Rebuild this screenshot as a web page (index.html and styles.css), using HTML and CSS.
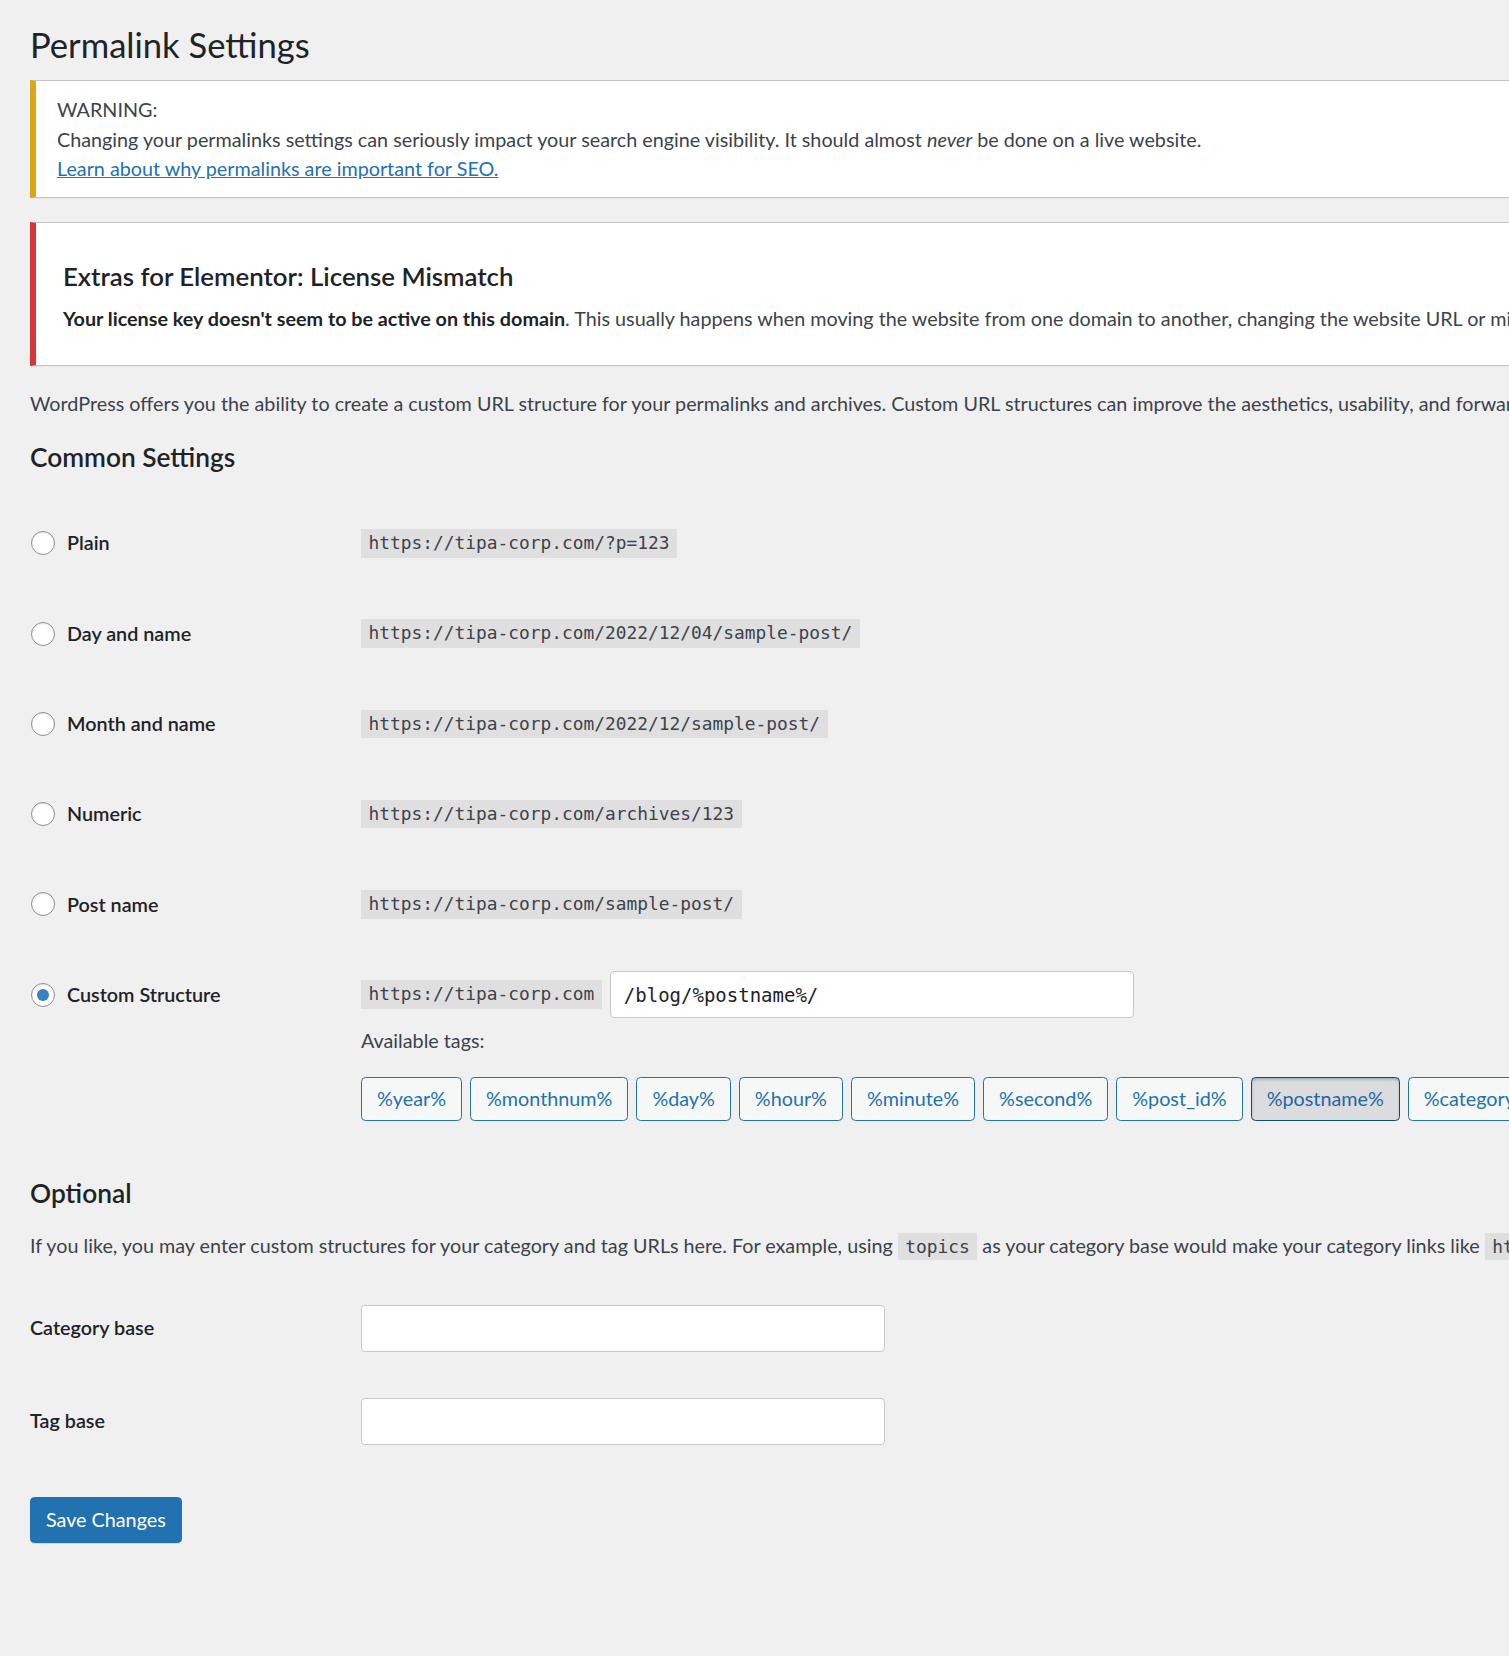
FILE: index.html
```html
<!DOCTYPE html>
<html lang="en">
<head>
  <meta charset="UTF-8">
  <title>Permalink Settings</title>
  <link rel="stylesheet" href="styles.css">
</head>
<body>

<div class="wrap">
  <h1>Permalink Settings</h1>

  <div class="notice notice-warning">
    <p>WARNING:<br>
    Changing your permalinks settings can seriously impact your search engine visibility. It should almost <em>never</em> be done on a live website.<br>
    <a href="#">Learn about why permalinks are important for SEO.</a></p>
  </div>

  <div class="notice notice-error extras">
    <h3>Extras for Elementor: License Mismatch</h3>
    <p><strong>Your license key doesn't seem to be active on this domain</strong>. This usually happens when moving the website from one domain to another, changing the website URL or migrating from a staging site to production.</p>
  </div>

  <p class="intro">WordPress offers you the ability to create a custom URL structure for your permalinks and archives. Custom URL structures can improve the aesthetics, usability, and forward-compatibility of your links. A number of tags are available, and here are some examples to get you started.</p>

  <h2>Common Settings</h2>

  <div class="form-table">
    <div class="row">
      <label class="choice"><input type="radio" name="selection"> Plain</label>
      <div class="field"><div class="line"><code>https://tipa-corp.com/?p=123</code></div></div>
    </div>
    <div class="row">
      <label class="choice"><input type="radio" name="selection"> Day and name</label>
      <div class="field"><div class="line"><code>https://tipa-corp.com/2022/12/04/sample-post/</code></div></div>
    </div>
    <div class="row">
      <label class="choice"><input type="radio" name="selection"> Month and name</label>
      <div class="field"><div class="line"><code>https://tipa-corp.com/2022/12/sample-post/</code></div></div>
    </div>
    <div class="row">
      <label class="choice"><input type="radio" name="selection"> Numeric</label>
      <div class="field"><div class="line"><code>https://tipa-corp.com/archives/123</code></div></div>
    </div>
    <div class="row">
      <label class="choice"><input type="radio" name="selection"> Post name</label>
      <div class="field"><div class="line"><code>https://tipa-corp.com/sample-post/</code></div></div>
    </div>
    <div class="row">
      <label class="choice"><input type="radio" name="selection" checked> Custom Structure</label>
      <div class="field">
        <div class="line">
          <code>https://tipa-corp.com</code>
          <input type="text" class="regular-text code" value="/blog/%postname%/">
        </div>
        <p class="tags-label">Available tags:</p>
        <ul class="tags">
          <li><button type="button">%year%</button></li>
          <li><button type="button">%monthnum%</button></li>
          <li><button type="button">%day%</button></li>
          <li><button type="button">%hour%</button></li>
          <li><button type="button">%minute%</button></li>
          <li><button type="button">%second%</button></li>
          <li><button type="button">%post_id%</button></li>
          <li><button type="button" class="active">%postname%</button></li>
          <li><button type="button">%category%</button></li>
          <li><button type="button">%author%</button></li>
        </ul>
      </div>
    </div>
  </div>

  <h2 class="optional-title">Optional</h2>
  <p class="optional-text">If you like, you may enter custom structures for your category and tag URLs here. For example, using <code>topics</code> as your category base would make your category links like <code>https://tipa-corp.com/topics/uncategorized/</code>. If you leave these blank the defaults will be used.</p>

  <div class="form-table bases">
    <div class="row">
      <label class="plain-label" for="category_base">Category base</label>
      <div class="field"><div class="line"><input type="text" id="category_base" class="regular-text"></div></div>
    </div>
    <div class="row">
      <label class="plain-label" for="tag_base">Tag base</label>
      <div class="field"><div class="line"><input type="text" id="tag_base" class="regular-text"></div></div>
    </div>
  </div>

  <button type="submit" class="button-primary">Save Changes</button>
</div>

</body>
</html>
```
FILE: styles.css
```css
:root {
  --text: #3c434a;
  --heading: #1d2327;
  --blue: #2271b1;
  --mono: "DejaVu Sans Mono", "Liberation Mono", monospace;
}

body {
  margin: 0;
  background: #f0f0f1;
  color: var(--text);
  font-family: Lato, "Open Sans", sans-serif;
  font-size: 19.75px;
  line-height: 1.5;
  overflow-x: hidden;
}

.wrap {
  width: 3000px;
  padding: 23px 0 80px 30px;
}

h1 {
  margin: 0 0 12px;
  font-size: 34.6px;
  font-weight: 400;
  line-height: 1.3;
  color: var(--heading);
}

h2 {
  margin: 0;
  font-size: 26.3px;
  font-weight: 600;
  line-height: 1.3;
  color: var(--heading);
}

p {
  margin: 0;
}

a {
  color: var(--blue);
}

code {
  font-family: var(--mono);
  font-size: 17.86px;
  line-height: 22.5px;
  padding: 3px 7.5px;
  background: rgba(0, 0, 0, 0.07);
  color: var(--text);
}

/* notices */
.notice {
  background: #fff;
  border: 1px solid #c3c4c7;
  border-left-width: 6px;
  box-shadow: 0 1px 1px rgba(0, 0, 0, 0.04);
}

.notice-warning {
  border-left-color: #dba617;
  padding: 14px 20px 13px 21px;
  margin-bottom: 24px;
}

.notice-warning p {
  line-height: 29.6px;
}

.notice-error {
  border-left-color: #d63638;
}

.extras {
  padding: 36px 26px 31.5px 27px;
  margin-bottom: 23px;
}

.extras h3 {
  margin: 0 0 11px;
  font-size: 25.8px;
  font-weight: 600;
  line-height: 34px;
  color: var(--heading);
}

.extras p {
  line-height: 29.6px;
  color: var(--text);
}

.extras strong {
  color: var(--heading);
}

.intro {
  line-height: 29.6px;
  margin-bottom: 21.5px;
}

/* settings rows */
.form-table {
  margin-top: 24px;
}

.row {
  display: grid;
  grid-template-columns: 331px 1fr;
  padding: 21.65px 0;
}

.choice,
.plain-label {
  display: flex;
  align-items: center;
  height: 47px;
  color: var(--heading);
  font-weight: 600;
}

.choice input {
  appearance: none;
  width: 24px;
  height: 24px;
  margin: 0 12px 0 1px;
  border: 1.5px solid #8c8f94;
  border-radius: 50%;
  background: #fff;
  box-shadow: inset 0 1px 2px rgba(0, 0, 0, 0.1);
  display: grid;
  place-items: center;
  flex: none;
}

.choice input:checked::before {
  content: "";
  width: 12px;
  height: 12px;
  border-radius: 50%;
  background: #3582c4;
}

.line {
  display: flex;
  align-items: center;
  gap: 8px;
  height: 47px;
}

input[type="text"] {
  box-sizing: border-box;
  width: 524px;
  height: 47px;
  padding: 0 13px;
  border: 1px solid #c8c9cc;
  border-radius: 4px;
  background: #fff;
  color: var(--heading);
  font-size: 19.75px;
}

input.code {
  font-family: var(--mono);
  font-size: 19px;
}

.tags-label {
  margin-top: 8px;
  line-height: 29.6px;
}

.tags {
  display: flex;
  gap: 8px;
  list-style: none;
  margin: 21px 0 0;
  padding: 0;
}

.tags button {
  height: 44px;
  padding: 0 15px;
  border: 1px solid var(--blue);
  border-radius: 4.5px;
  background: #f6f7f7;
  color: var(--blue);
  font-family: inherit;
  font-size: 19.75px;
  white-space: nowrap;
}

.tags button.active {
  background: #dcdcde;
  border-color: #0a4b78;
  color: #1f66a6;
  box-shadow: inset 0 2px 5px -3px #0a4b78;
}

/* optional section */
.optional-title {
  margin-top: 34px;
}

.optional-text {
  margin-top: 20.5px;
  line-height: 29.6px;
}

.bases {
  margin-top: 21px;
}

.bases .row {
  padding: 23px 0;
}

.button-primary {
  margin-top: 29px;
  height: 46px;
  padding: 0 15px;
  border: 1px solid var(--blue);
  border-radius: 4.5px;
  background: var(--blue);
  color: #fff;
  font-family: inherit;
  font-size: 19.75px;
  box-shadow: 0 1px 0 rgba(0, 0, 0, 0.1);
}
```
